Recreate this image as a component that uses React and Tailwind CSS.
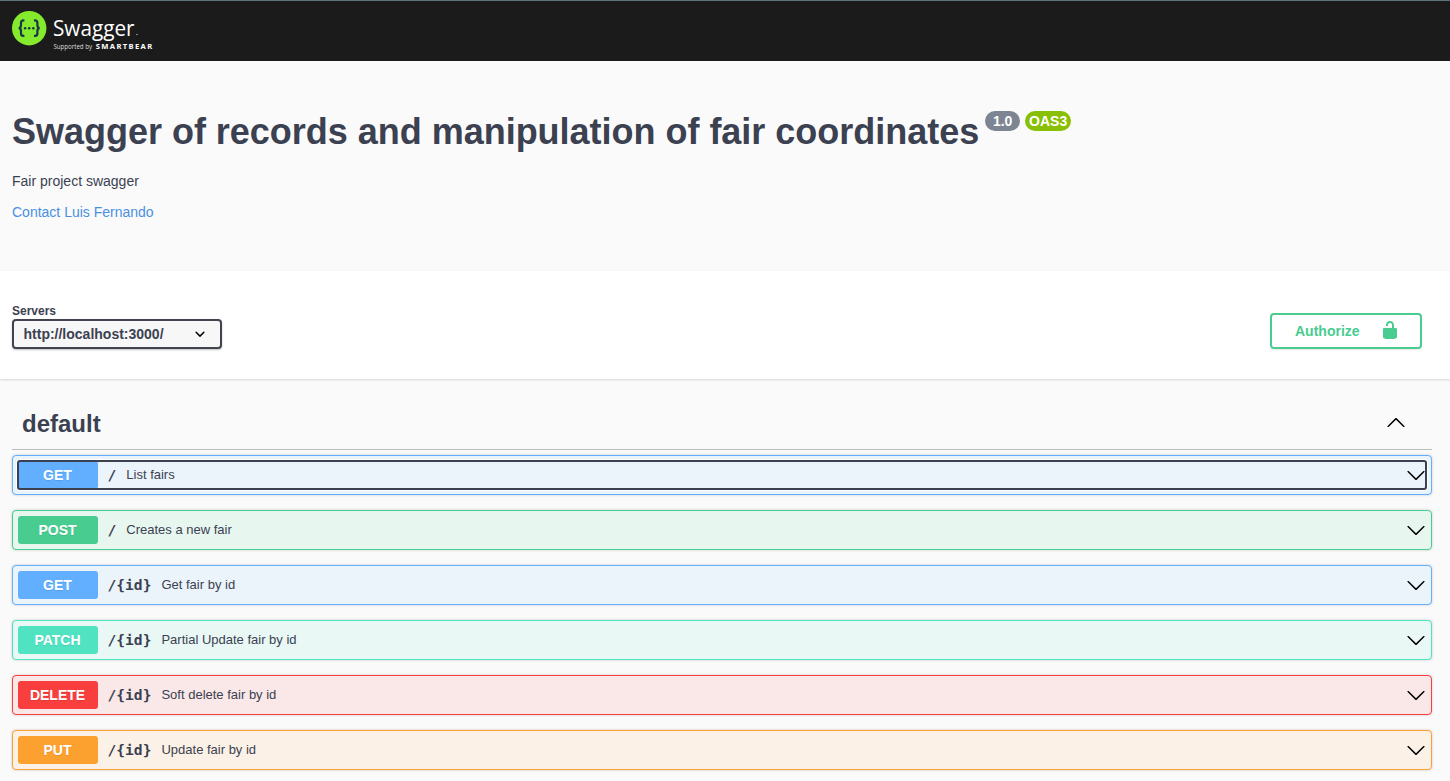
const ARROW_DOWN =
  "M17.418 6.109c.272-.268.709-.268.979 0s.271.701 0 .969l-7.908 7.83c-.27.268-.707.268-.979 0l-7.908-7.83c-.27-.268-.27-.701 0-.969.271-.268.709-.268.979 0L10 13.25l7.418-7.141z";
const ARROW_UP =
  "M17.418 14.908c.272.268.709.268.979 0s.271-.701 0-.969l-7.908-7.83c-.27-.268-.707-.268-.979 0l-7.908 7.83c-.27.268-.27.701 0 .969.271.268.709.268.979 0L10 7.767l7.418 7.141z";
const SELECT_ARROW =
  "M13.418 7.859a.695.695 0 01.978 0 .68.68 0 010 .969l-3.908 3.83a.697.697 0 01-.979 0l-3.908-3.83a.68.68 0 010-.969.695.695 0 01.978 0L10 11l3.418-3.141z";
const UNLOCKED =
  "M15.8 8H14V5.6C14 2.703 12.665 1 10 1 7.334 1 6 2.703 6 5.6V6h2v-.801C8 3.754 8.797 3 10 3c1.203 0 2 .754 2 2.199V8H4c-.553 0-1 .646-1 1.199V17c0 .549.428 1.139.951 1.307l1.197.387C5.672 18.861 6.55 19 7.1 19h5.8c.549 0 1.428-.139 1.951-.307l1.196-.387c.524-.167.953-.757.953-1.306V9.199C17 8.646 16.352 8 15.8 8z";

const OPERATIONS = [
  { method: "GET", path: "/", summary: "List fairs", focused: true, box: "border-[#61affe] bg-[#ebf3fb]", badge: "bg-[#61affe]" },
  { method: "POST", path: "/", summary: "Creates a new fair", box: "border-[#49cc90] bg-[#e8f6f0]", badge: "bg-[#49cc90]" },
  { method: "GET", path: "/{id}", summary: "Get fair by id", box: "border-[#61affe] bg-[#ebf3fb]", badge: "bg-[#61affe]" },
  { method: "PATCH", path: "/{id}", summary: "Partial Update fair by id", box: "border-[#50e3c2] bg-[#e9f8f5]", badge: "bg-[#50e3c2]" },
  { method: "DELETE", path: "/{id}", summary: "Soft delete fair by id", box: "border-[#f93e3e] bg-[#fae7e7]", badge: "bg-[#f93e3e]" },
  { method: "PUT", path: "/{id}", summary: "Update fair by id", box: "border-[#fca130] bg-[#fbf1e6]", badge: "bg-[#fca130]" },
];

function Icon({ d, className = "" }) {
  return (
    <svg width="20" height="20" viewBox="0 0 20 20" className={"block shrink-0 " + className} fill="currentColor">
      <path d={d} />
    </svg>
  );
}

function Logo() {
  return (
    <svg width="150" height="44" viewBox="0 0 150 44" className="block">
      <circle cx="17.2" cy="17.2" r="17.2" fill="#85ea2d" />
      <g fill="none" stroke="#173647" strokeWidth="2.2">
        <path d="M12.4 9.4h-.9c-1.7 0-2.5.8-2.5 2.4v2.5c0 1.7-.7 2.6-2.2 2.8c1.5.2 2.2 1.1 2.2 2.8v2.5c0 1.6.8 2.4 2.5 2.4h.9" />
        <path d="M22 9.4h.9c1.7 0 2.5.8 2.5 2.4v2.5c0 1.7.7 2.6 2.2 2.8c-1.5.2-2.2 1.1-2.2 2.8v2.5c0 1.6-.8 2.4-2.5 2.4h-.9" />
      </g>
      <g fill="#173647">
        <circle cx="13.1" cy="17.2" r="1.25" />
        <circle cx="17.2" cy="17.2" r="1.25" />
        <circle cx="21.3" cy="17.2" r="1.25" />
      </g>
      <text x="41" y="24.6" fontSize="22" textLength="81.5" lengthAdjust="spacingAndGlyphs" fill="#fff" fontFamily="'Open Sans', sans-serif">Swagger</text>
      <rect x="124" y="23" width="2" height="1" fill="#888" />
      <text x="41.5" y="38.2" fontSize="6.2" textLength="38.5" fill="#ddd" fontFamily="'Open Sans', sans-serif">Supported by</text>
      <text x="83.7" y="38.2" fontSize="7.6" fontWeight="700" textLength="56.5" fill="#fff" fontFamily="'Noto Sans', sans-serif">SMARTBEAR</text>
    </svg>
  );
}

function Operation({ op }) {
  return (
    <div className={"relative flex h-10 items-center rounded border p-[5px] shadow-[0_0_3px_rgba(0,0,0,0.19)] " + op.box}>
      <span className={"flex h-7 w-20 items-center justify-center rounded-[3px] pr-px text-sm font-bold text-white [text-shadow:0_1px_0_rgba(0,0,0,0.1)] " + op.badge}>
        {op.method}
      </span>
      <span className="ml-[9.5px] -mt-px font-['DejaVu_Sans_Mono',monospace] text-[14.6px] font-bold">{op.path}</span>
      <span className="ml-2.5 flex-1 pb-px text-[13px]">{op.summary}</span>
      <Icon d={ARROW_DOWN} className="text-black" />
      {op.focused && (
        <div className="absolute inset-x-1 inset-y-1 rounded-[3px] border-2 border-[#3b4151] shadow-[0_0_0_1px_#fff]" />
      )}
    </div>
  );
}

export default function App() {
  return (
    <div className="h-[781px] overflow-hidden bg-[#fafafa] font-['Liberation_Sans',Arial,sans-serif] text-[#3b4151]">
      <header className="h-[61px] border-t border-[#5f737d] bg-[#1b1b1b] pl-3 pt-2.5">
        <Logo />
      </header>

      <section className="h-[210px] px-3 pt-[50px]">
        <h1 className="flex items-start text-[36px] leading-[41px] font-bold">
          <span className="tracking-[-0.018px]">Swagger of records and manipulation of fair coordinates</span>
          <span className="ml-1.5 flex h-5 w-[35px] items-center justify-center rounded-full bg-[#7d8492] text-sm leading-none text-white">1.0</span>
          <span className="ml-[5px] flex h-5 w-[46px] items-center justify-center rounded-full bg-[#89bf04] text-sm leading-none text-white">OAS3</span>
        </h1>
        <p className="mt-[21px] text-sm leading-4">Fair project swagger</p>
        <a className="mt-[15px] block text-sm leading-4 text-[#4990e2]">Contact Luis Fernando</a>
      </section>

      <section className="flex h-[108px] justify-between bg-white pl-3 pr-7 shadow-[0_1px_2px_rgba(0,0,0,0.15)]">
        <div className="pt-[33px]">
          <div className="text-xs leading-[15px] font-bold">Servers</div>
          <div className="flex h-[30px] w-[210px] items-center justify-between rounded border-2 border-[#41444e] bg-[#f7f7f7] pl-[9.5px] pr-2.5 text-sm font-bold shadow-[0_1px_2px_rgba(0,0,0,0.25)]">
            http://localhost:3000/
            <Icon d={SELECT_ARROW} className="text-black" />
          </div>
        </div>
        <button className="mt-[42px] flex h-9 w-[152px] items-center rounded border-2 border-[#49cc90] pl-[23px] text-sm font-bold text-[#49cc90] shadow-[0_1px_2px_rgba(0,0,0,0.1)]">
          <span className="w-[85px] text-left">Authorize</span>
          <Icon d={UNLOCKED} className="-mt-0.5" />
        </button>
      </section>

      <main className="pl-3 pr-[18px] pt-[18px]">
        <div className="flex h-[53px] items-center justify-between border-b border-[#bbbdc1] pl-2.5 pr-[26px]">
          <h2 className="pt-0.5 text-2xl font-bold">default</h2>
          <Icon d={ARROW_UP} className="-mt-0.5 text-black" />
        </div>
        <div className="mt-[5px] flex flex-col gap-[15px]">
          {OPERATIONS.map((op) => (
            <Operation key={op.method + op.path} op={op} />
          ))}
        </div>
      </main>
    </div>
  );
}
